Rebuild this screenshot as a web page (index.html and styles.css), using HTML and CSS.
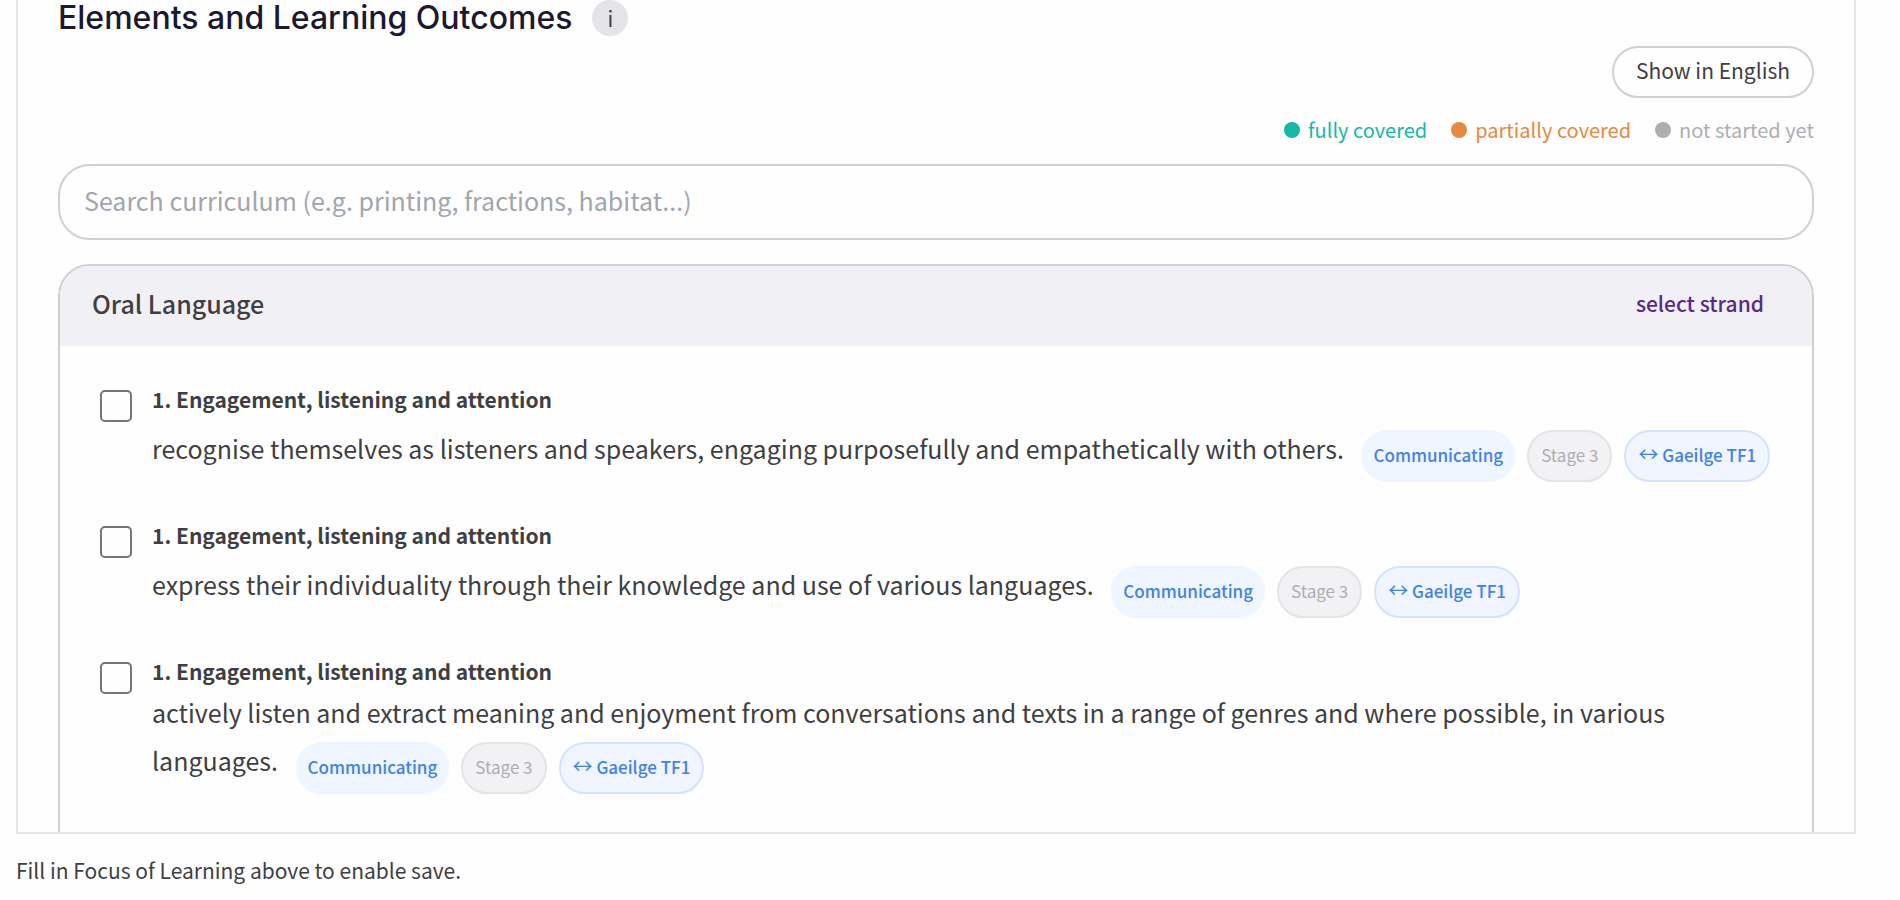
FILE: index.html
```html
<!DOCTYPE html>
<html lang="en">
  <head>
    <meta charset="UTF-8" />
    <meta name="viewport" content="width=device-width, initial-scale=1.0" />
    <title>Elements and Learning Outcomes</title>
    <link rel="stylesheet" href="styles.css">
  </head>
  <body>
    <main class="panel">
      <div class="panelHeader">
        <h1>Elements and Learning Outcomes</h1>
        <button type="button" class="infoBtn">i</button>
      </div>
      <div class="toolbar">
        <button type="button" class="languageBtn">Show in English</button>
      </div>
      <ul class="legend">
        <li class="full">fully covered</li>
        <li class="partial">partially covered</li>
        <li class="none">not started yet</li>
      </ul>
      <input
        type="search"
        class="search"
        aria-label="Search curriculum"
        placeholder="Search curriculum (e.g. printing, fractions, habitat...)"
      />
      <section class="strand">
        <div class="strandHeader">
          <h2>Oral Language</h2>
          <button type="button" class="selectBtn">select strand</button>
        </div>
        <ul class="outcomes">
          <li class="outcome">
            <input type="checkbox" id="outcome1" />
            <label for="outcome1">
              <strong>1. Engagement, listening and attention</strong>
              <span class="description">
                recognise themselves as listeners and speakers, engaging purposefully and empathetically with others.
                <span class="chips">
                  <span class="chip element">Communicating</span>
                  <span class="chip stage">Stage 3</span>
                  <span class="chip link"><span class="arrow">↔</span> Gaeilge TF1</span>
                </span>
              </span>
            </label>
          </li>
          <li class="outcome">
            <input type="checkbox" id="outcome2" />
            <label for="outcome2">
              <strong>1. Engagement, listening and attention</strong>
              <span class="description">
                express their individuality through their knowledge and use of various languages.
                <span class="chips">
                  <span class="chip element">Communicating</span>
                  <span class="chip stage">Stage 3</span>
                  <span class="chip link"><span class="arrow">↔</span> Gaeilge TF1</span>
                </span>
              </span>
            </label>
          </li>
          <li class="outcome">
            <input type="checkbox" id="outcome3" />
            <label for="outcome3">
              <strong>1. Engagement, listening and attention</strong>
              <span class="description">
                actively listen and extract meaning and enjoyment from conversations and texts in a range of genres and where possible, in various languages.
                <span class="chips">
                  <span class="chip element">Communicating</span>
                  <span class="chip stage">Stage 3</span>
                  <span class="chip link"><span class="arrow">↔</span> Gaeilge TF1</span>
                </span>
              </span>
            </label>
          </li>
        </ul>
      </section>
    </main>
    <footer class="hint">Fill in Focus of Learning above to enable save.</footer>
  </body>
</html>
```
FILE: styles.css
```css
* {
  box-sizing: border-box;
}
body {
  margin: 0;
  height: 100vh;
  display: flex;
  flex-direction: column;
  background-color: #fefefe;
  color: #3f3f43;
  font-family: "Noto Sans CJK SC", "Noto Sans", sans-serif;
  font-size: 25px;
  line-height: 40px;
}
button,
input {
  font-family: inherit;
  color: inherit;
}
button {
  cursor: pointer;
}
ul {
  list-style: none;
  margin: 0;
  padding: 0;
}

.panel {
  flex: 1;
  min-height: 0;
  overflow: hidden;
  margin: 0 44px 0 16px;
  padding: 0 40px;
  border: 2px solid #e4e4e5;
  border-top: none;
}
.panelHeader {
  display: flex;
  align-items: center;
  gap: 20px;
  height: 36px;
}
.panelHeader h1 {
  margin: 0;
  color: #1b1830;
  font-family: Inter, sans-serif;
  font-size: 32px;
  font-weight: 500;
  line-height: 36px;
}
.infoBtn {
  width: 36px;
  height: 36px;
  padding: 0;
  border: none;
  border-radius: 50%;
  background-color: #e4e4e8;
  font-size: 21px;
  line-height: 32px;
}

.toolbar {
  display: flex;
  justify-content: flex-end;
  margin-top: 10px;
}
.languageBtn {
  height: 52px;
  padding: 0 22px 4px;
  border: 2px solid #d0d0d2;
  border-radius: 26px;
  background-color: #fefefe;
  font-size: 21px;
}
.legend {
  display: flex;
  justify-content: flex-end;
  gap: 24px;
  margin: 16px 0 18px;
  font-size: 20px;
  line-height: 32px;
}
.legend li {
  display: flex;
  align-items: center;
  gap: 8px;
}
.legend li::before {
  content: "";
  width: 16px;
  height: 16px;
  border-radius: 50%;
  background-color: currentColor;
}
.full {
  color: #16b8a6;
}
.partial {
  color: #e68a40;
}
.none {
  color: #aeaeb2;
}

.search {
  display: block;
  width: 100%;
  height: 76px;
  padding: 0 24px 4px;
  border: 2px solid #d0d0d2;
  border-radius: 32px;
  background-color: #fefefe;
  font-size: 25px;
  appearance: none;
}
.search::placeholder {
  color: #a1a5ad;
}

.strand {
  margin-top: 24px;
  border: 2px solid #d0d0d2;
  border-radius: 32px;
  overflow: hidden;
}
.strandHeader {
  display: flex;
  justify-content: space-between;
  align-items: center;
  height: 80px;
  padding: 0 48px 6px 32px;
  background-color: #f1f0f5;
}
.strandHeader h2 {
  margin: 0;
  font-size: 25px;
  font-weight: 500;
}
.selectBtn {
  padding: 0;
  border: none;
  background: none;
  color: #5b2a86;
  font-size: 21px;
  font-weight: 500;
}

.outcomes {
  display: grid;
  gap: 36px;
  padding: 38px 32px 80px 40px;
}
.outcome {
  display: flex;
  gap: 20px;
}
.outcome input {
  flex: none;
  appearance: none;
  width: 32px;
  height: 32px;
  margin: 6px 0 0;
  border: 2px solid #767678;
  border-radius: 5px;
}
.outcome input:checked {
  background-color: #5b2a86;
}
.outcome strong {
  display: block;
  margin-bottom: 6px;
  font-size: 21px;
  font-weight: 600;
  line-height: 30px;
}
.description {
  display: block;
}
.chips {
  display: inline-flex;
  gap: 12px;
  margin: 10px 0 2px 12px;
  vertical-align: middle;
}
.chip {
  padding: 7px 12px 9px;
  border: 2px solid;
  border-radius: 26px;
  font-size: 17px;
  line-height: 32px;
  white-space: nowrap;
}
.element {
  padding: 7px 10px 9px;
  border-color: #eff6ff;
  background-color: #eff6ff;
  color: #3f82ea;
  font-weight: 500;
}
.stage {
  border-color: #e4e4e6;
  background-color: #f2f2f5;
  color: #aeaeb2;
}
.link {
  border-color: #d6e2fd;
  background-color: #f0f5ff;
  color: #3f82ea;
  font-weight: 500;
}
.arrow {
  font-size: 20px;
  font-weight: 400;
  line-height: 20px;
}

.hint {
  height: 66px;
  padding: 16px;
  font-size: 21px;
}
```
